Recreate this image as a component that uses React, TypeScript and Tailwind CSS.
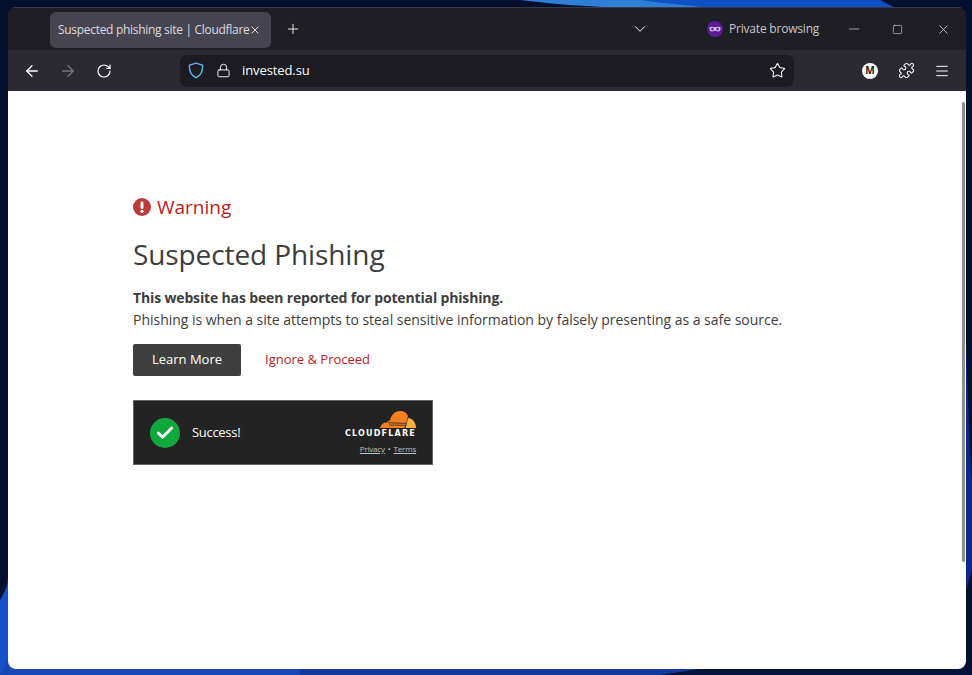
import { ArrowLeft, ArrowRight, Check, ChevronDown, Lock, Menu, Minus, Plus, Puzzle, RotateCw, Square, Star, X } from "lucide-react";

const sans = "font-['Open_Sans','Noto_Sans',sans-serif]";

function Wallpaper() {
	return (
		<svg className="absolute inset-0" width="972" height="675" viewBox="0 0 972 675">
			<rect width="972" height="675" fill="#050f2e" />
			<path d="M520 0 C600 10 700 12 760 0 Z" fill="#2f7fd8" />
			<path d="M640 0 C700 8 820 20 972 14 L972 0 Z" fill="#0d4fc4" />
			<path d="M880 0 L972 0 L972 60 C950 40 920 20 880 0 Z" fill="#04102f" />
			<path d="M0 675 L0 600 C6 590 8 585 8 575 L30 675 Z" fill="#1650c8" />
			<path d="M8 660 L300 669 L300 675 L0 675 Z" fill="#1546b4" />
			<path d="M300 669 L700 669 L660 675 L300 675 Z" fill="#123a9c" />
			<path d="M700 669 L972 669 L972 675 L680 675 Z" fill="#06123a" />
			<path d="M966 340 C968 400 970 460 972 480 L972 570 L966 590 Z" fill="#0b2a8c" />
		</svg>
	);
}

function PrivateMask() {
	return (
		<svg width="16" height="16" viewBox="0 0 16 16">
			<circle cx="8" cy="8" r="8" fill="#5b1a96" />
			<path d="M2.5 6.6C3.6 5.5 6.2 5.6 8 6.6 9.8 5.6 12.4 5.5 13.5 6.6 13.9 8.6 13 10.6 10.8 10.6 9.4 10.6 8.9 9.6 8 9.6 7.1 9.6 6.6 10.6 5.2 10.6 3 10.6 2.1 8.6 2.5 6.6Z" fill="#d9c3ee" />
			<circle cx="5.4" cy="8.1" r="1.3" fill="#5b1a96" />
			<circle cx="10.6" cy="8.1" r="1.3" fill="#5b1a96" />
		</svg>
	);
}

function Shield() {
	return (
		<svg width="16" height="17" viewBox="0 0 16 17" fill="none">
			<defs>
				<linearGradient id="sh" x1="0" y1="0" x2="1" y2="1">
					<stop offset="0" stopColor="#7c9cf5" />
					<stop offset="1" stopColor="#3fd0e8" />
				</linearGradient>
			</defs>
			<path d="M8 1.2 14.6 3.2C14.9 9 12.8 13.5 8 15.8 3.2 13.5 1.1 9 1.4 3.2Z" stroke="url(#sh)" strokeWidth="1.4" strokeLinejoin="round" />
		</svg>
	);
}

function CloudflareLogo() {
	return (
		<svg width="36" height="17" viewBox="0 0 36 17">
			<path d="M0 17 C1 13 4 11 7 11.500 C8 10 9 9.500 10 9.500 C11 4 15 0 20 0 C24 0 27 2 28 5 L26 13 C25.600 15 24.500 17 23 17 Z" fill="#f38020" />
			<path d="M28 7 C32 7 36 11 36 17 L25.500 17 C26.500 14.500 27 11 28 7 Z" fill="#faae40" />
			<path d="M8 11.800 L26 12.300 M9 14 L26 14.300" stroke="#222" strokeWidth="0.8" />
		</svg>
	);
}

export default function App() {
	return (
		<div className={`relative w-[972px] h-[675px] overflow-hidden ${sans}`}>
			<Wallpaper />
			<div className="relative pt-[7px] pl-[8px] pr-[6px]">
				<div className="h-[662px] flex flex-col rounded-[8px] overflow-hidden">
					{/* Barra de abas */}
					<div className="h-[43px] bg-[#1f1e25] flex items-center shrink-0 border-t border-[#3a3a44]">
						<div className="ml-[42px] mt-[1px] w-[221px] h-[36px] rounded-[6px] bg-[#46454f] flex items-center pl-[8px] pr-[10px] justify-between">
							<span className="text-[12px] tracking-[-0.3px] text-[#dcdce0] whitespace-nowrap">Suspected phishing site | Cloudflare</span>
							<X size={12} className="text-[#e0e0e4] shrink-0" />
						</div>
						<Plus size={16} strokeWidth={1.5} className="ml-[14px] text-[#e4e4e8]" />
						<ChevronDown size={18} strokeWidth={1.4} className="ml-[330px] text-[#d0d0d6]" />
						<div className="ml-[58px] flex items-center gap-[6px]">
							<PrivateMask />
							<span className="text-[12px] tracking-[-0.2px] text-[#c6c6cc] whitespace-nowrap">Private browsing</span>
						</div>
						<Minus size={16} strokeWidth={1} className="ml-[27px] text-[#e4e4e8]" />
						<Square size={11} strokeWidth={1.3} className="ml-[30px] text-[#e4e4e8]" />
						<X size={15} strokeWidth={1.2} className="ml-[33px] text-[#e4e4e8]" />
					</div>
					{/* Barra de navegacao */}
					<div className="h-[41px] bg-[#2b2a33] flex items-center shrink-0">
						<ArrowLeft size={18} strokeWidth={1.8} className="ml-[15px] text-[#fbfbfe]" />
						<ArrowRight size={18} strokeWidth={1.8} className="ml-[18px] text-[#75747c]" />
						<RotateCw size={16} strokeWidth={1.8} className="ml-[19px] text-[#fbfbfe]" />
						<div className="ml-[68px] w-[614px] h-[32px] rounded-[8px] bg-[#1c1b22] flex items-center pl-[8px] pr-[8px]">
							<Shield />
							<Lock size={15} strokeWidth={1.5} className="ml-[12px] text-[#fbfbfe]" />
							<span className="ml-[11px] text-[13px] tracking-[-0.1px] text-[#fbfbfe]">invested.su</span>
							<Star size={17} strokeWidth={1.5} className="ml-auto text-[#fbfbfe]" />
						</div>
						<div className="ml-[68px] w-[16px] h-[16px] rounded-full bg-white flex items-center justify-center text-[10px] font-bold text-[#1c1b22]">M</div>
						<Puzzle size={17} strokeWidth={1.5} className="ml-[20px] text-[#fbfbfe]" />
						<Menu size={16} strokeWidth={1.5} className="ml-[19px] text-[#fbfbfe]" />
					</div>
					{/* Conteudo da pagina */}
					<div className="relative flex-1 bg-white pl-[125px] pt-[102px]">
						<div className="absolute right-[1px] top-[11px] w-[3px] h-[460px] rounded-full bg-[#8f8f8f]" />
						<div className="flex items-center gap-[6px] h-[28px]">
							<svg width="18" height="18" viewBox="0 0 18 18">
								<circle cx="9" cy="9" r="9" fill="#bd3b3b" />
								<rect x="7.600" y="3.500" width="2.800" height="7.500" rx="1.200" fill="#fff" />
								<circle cx="9" cy="13.300" r="1.600" fill="#fff" />
							</svg>
							<span className="text-[19px] leading-[28px] font-medium text-[#b91c1c]">Warning</span>
						</div>
						<h1 className="mt-[14px] text-[28px] leading-[38px] tracking-[-0.1px] text-[#3d3d3d]">Suspected Phishing</h1>
						<p className="mt-[14px] text-[14px] leading-[22px] font-bold tracking-[-0.15px] text-[#3d3d3d]">This website has been reported for potential phishing.</p>
						<p className="text-[14px] leading-[22px] tracking-[-0.02px] text-[#3d3d3d]">Phishing is when a site attempts to steal sensitive information by falsely presenting as a safe source.</p>
						<div className="mt-[13px] flex items-center">
							<button className="w-[108px] h-[32px] rounded-[2px] bg-[#3f3f3f] text-[13px] text-white">Learn More</button>
							<a className="ml-[24px] text-[13px] text-[#b91c1c]">Ignore &amp; Proceed</a>
						</div>
						{/* Widget Turnstile */}
						<div className="mt-[24px] w-[300px] h-[65px] bg-[#232323] border border-[#666] flex items-center pl-[16px] pr-[16px]">
							<div className="w-[30px] h-[30px] rounded-full bg-[#10a83c] flex items-center justify-center">
								<Check size={20} strokeWidth={3.5} className="text-white" />
							</div>
							<span className="ml-[12px] text-[13px] tracking-[-0.3px] text-white">Success!</span>
							<div className="ml-auto flex flex-col items-end">
								<CloudflareLogo />
								<span className="text-[8px] leading-[10px] mt-[1px] font-bold tracking-[1.2px] text-white font-['DejaVu_Sans',sans-serif]">CLOUDFLARE</span>
								<div className="mt-[4px] flex items-center gap-[3px] text-[8px] leading-[11px] tracking-[-0.2px] text-[#b9c0cc]">
									<a className="underline">Privacy</a>
									<span>•</span>
									<a className="underline">Terms</a>
								</div>
							</div>
						</div>
					</div>
				</div>
			</div>
		</div>
	);
}
